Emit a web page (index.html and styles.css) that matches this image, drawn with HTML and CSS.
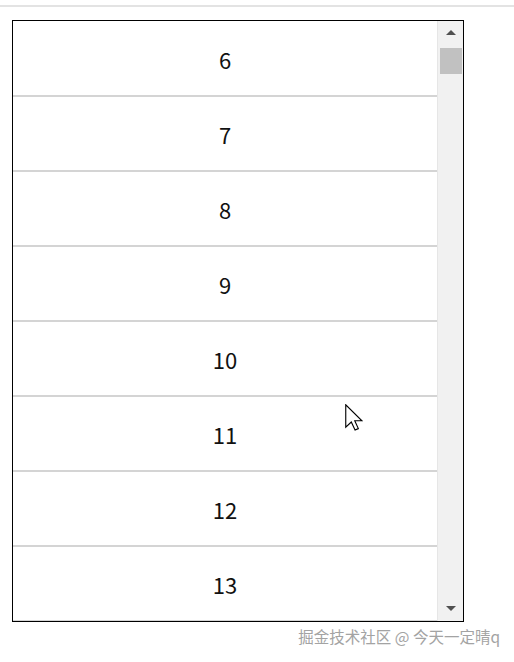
FILE: index.html
```html
<!DOCTYPE html>
<html lang="zh">
<head>
<meta charset="utf-8">
<title>Virtual list</title>
<link rel="stylesheet" href="styles.css">
</head>
<body>
<div class="topline"></div>
<div class="viewport">
  <div class="list">
    <div class="row">6</div>
    <div class="row">7</div>
    <div class="row">8</div>
    <div class="row">9</div>
    <div class="row">10</div>
    <div class="row">11</div>
    <div class="row">12</div>
    <div class="row">13</div>
  </div>
  <div class="scrollbar">
    <div class="arrow up"></div>
    <div class="track"><div class="thumb"></div></div>
    <div class="arrow down"></div>
  </div>
</div>
<svg class="cursor" width="18" height="27" viewBox="0 0 12 18">
  <path d="M0.5 0.5 L0.5 15.5 L4.2 12 L6.7 17.4 L8.9 16.4 L6.5 11.2 L11.3 11.2 Z" fill="#fff" stroke="#000" stroke-width="0.75" stroke-linejoin="miter"/>
</svg>
<div class="watermark">掘金技术社区 @ 今天一定晴q</div>
</body>
</html>
```
FILE: styles.css
```css
html, body {
  margin: 0;
  padding: 0;
  background: #fff;
}
body {
  position: relative;
  width: 514px;
  height: 662px;
  overflow: hidden;
  font-family: "Noto Sans CJK SC", "Noto Sans", sans-serif;
}
.topline {
  margin-top: 5px;
  height: 2px;
  background: #e3e3e3;
}
.viewport {
  margin: 13px 0 0 12px;
  width: 450px;
  height: 600px;
  border: 1px solid #000;
  display: flex;
  overflow: hidden;
}
.list {
  flex: 0 0 424px;
  padding-top: 1px;
  overflow: hidden;
}
.row {
  box-sizing: border-box;
  height: 75px;
  border-bottom: 2px solid #d4d4d4;
  display: flex;
  align-items: center;
  justify-content: center;
  padding-top: 1px;
  font-size: 22px;
  color: #111;
}
.scrollbar {
  flex: 0 0 26px;
  background: #f1f1f1;
  border-left: 1px solid #e6e6e6;
  box-sizing: border-box;
  display: flex;
  flex-direction: column;
}
.arrow {
  height: 26px;
  display: flex;
  align-items: center;
  justify-content: center;
  flex: 0 0 auto;
}
.arrow::before {
  content: "";
  width: 0;
  height: 0;
  border-left: 5px solid transparent;
  border-right: 5px solid transparent;
}
.arrow.up::before {
  border-bottom: 5px solid #505050;
}
.arrow.up {
  align-items: flex-start;
  padding-top: 9px;
  box-sizing: border-box;
  height: 26px;
}
.arrow.down::before {
  border-top: 5px solid #505050;
}
.arrow.down {
  align-items: flex-end;
  padding-bottom: 10px;
  box-sizing: border-box;
}
.track {
  flex: 1;
  padding: 1px 1px 0 2px;
}
.thumb {
  height: 26px;
  background: #c1c1c1;
}
.cursor {
  position: absolute;
  left: 345px;
  top: 404px;
}
.watermark {
  position: absolute;
  right: 14px;
  top: 625px;
  font-size: 15.5px;
  color: #a3a3a3;
  text-shadow: 0 0 1px #fff, 0 0 1px #fff;
  white-space: nowrap;
}
```
